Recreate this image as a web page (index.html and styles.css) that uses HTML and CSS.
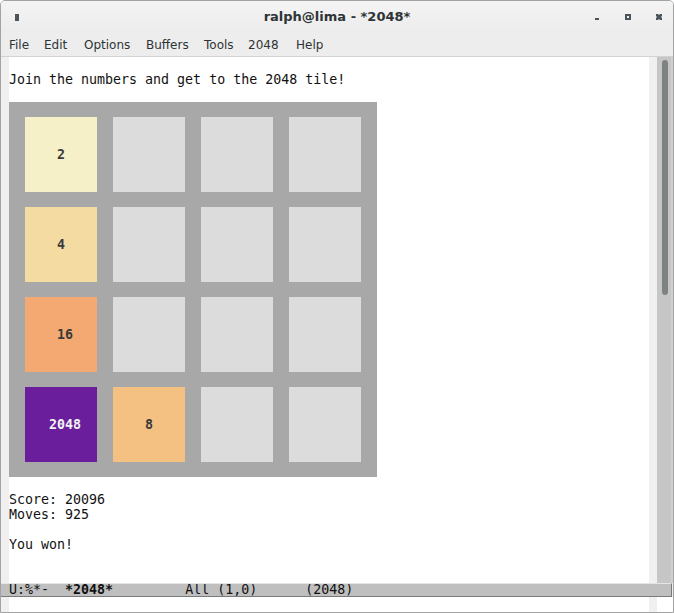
FILE: index.html
```html
<!DOCTYPE html>
<html>
<head>
<meta charset="utf-8">
<title>ralph@lima - *2048*</title>
<link rel="stylesheet" href="styles.css">
</head>
<body>
<div class="window">
  <div class="titlebar">
    <div class="tb-left"><span class="app-icon"></span></div>
    <div class="tb-title">ralph@lima - *2048*</div>
    <div class="tb-right">
      <svg class="btn" width="8" height="8" viewBox="0 0 8 8"><rect x="2" y="5" width="4" height="2" fill="#4b545a"/></svg>
      <svg class="btn" width="8" height="8" viewBox="0 0 8 8"><path d="M1 1h6v6h-6z M3 3v2h2v-2z" fill="#4b545a" fill-rule="evenodd"/></svg>
      <svg class="btn" width="8" height="8" viewBox="0 0 8 8"><path d="M1 1h2l1 1 1-1h2v2l-1 1 1 1v2h-2l-1-1-1 1h-2v-2l1-1-1-1z" fill="#4b545a"/></svg>
    </div>
  </div>
  <div class="menubar">
    <span class="mi m-file">File</span>
    <span class="mi m-edit">Edit</span>
    <span class="mi m-options">Options</span>
    <span class="mi m-buffers">Buffers</span>
    <span class="mi m-tools">Tools</span>
    <span class="mi m-2048">2048</span>
    <span class="mi m-help">Help</span>
  </div>
  <div class="main">
    <div class="fringe"></div>
    <div class="text">
      <div class="line"> </div>
      <div class="line">Join the numbers and get to the 2048 tile!</div>
      <div class="line"> </div>
      <div class="board">
        <div class="tile t2">    2</div>
        <div class="tile"></div>
        <div class="tile"></div>
        <div class="tile"></div>
        <div class="tile t4">    4</div>
        <div class="tile"></div>
        <div class="tile"></div>
        <div class="tile"></div>
        <div class="tile t16">    16</div>
        <div class="tile"></div>
        <div class="tile"></div>
        <div class="tile"></div>
        <div class="tile t2048">   2048</div>
        <div class="tile t8">    8</div>
        <div class="tile"></div>
        <div class="tile"></div>
      </div>
      <div class="line"> </div>
      <div class="line">Score: 20096</div>
      <div class="line">Moves: 925</div>
      <div class="line"> </div>
      <div class="line">You won!</div>
    </div>
    <div class="fringe"></div>
    <div class="scrollbar"><div class="thumb"></div></div>
  </div>
  <div class="modeline"> U:%*-  <b>*2048*</b>         All (1,0)      (2048)</div>
  <div class="minibuffer">
    <div class="fringe"></div>
    <div class="text"></div>
    <div class="fringe"></div>
    <div class="mb-end"></div>
  </div>
</div>
</body>
</html>
```
FILE: styles.css
```css
* { box-sizing: border-box; }
html, body { margin: 0; padding: 0; background: #ffffff; }
body { width: 674px; height: 613px; overflow: hidden; }

.window {
  width: 674px;
  height: 613px;
  border: 1px solid #a3a3a3;
  border-radius: 5px 5px 0 0;
  display: flex;
  flex-direction: column;
  overflow: hidden;
  background: #ededed;
}

.titlebar {
  height: 31px;
  flex: none;
  display: flex;
  align-items: center;
  background: linear-gradient(#f4f4f4, #ececec);
  font-family: "DejaVu Sans", sans-serif;
}
.tb-left { width: 120px; padding-left: 14px; display: flex; align-items: center; }
.app-icon { display: block; width: 4px; height: 7px; background: #4b545a; margin-top: 1px; }
.tb-title {
  flex: 1;
  text-align: center;
  font-weight: bold;
  font-size: 13px;
  color: #2e3436;
}
.tb-right { width: 120px; display: flex; justify-content: flex-end; gap: 23px; padding-right: 10px; padding-top: 1px; }
.btn { display: block; }

.menubar {
  height: 25px;
  flex: none;
  display: flex;
  align-items: center;
  background: #ededed;
  border-bottom: 1px solid #d2d2d2;
  font-family: "DejaVu Sans", sans-serif;
  font-size: 12px;
  color: #2e3436;
  padding-left: 8px;
  padding-top: 1px;
}
.mi { display: block; }
.m-file { width: 35px; }
.m-edit { width: 40px; }
.m-options { width: 62px; }
.m-buffers { width: 58px; }
.m-tools { width: 44px; }
.m-2048 { width: 48px; }

.main {
  height: 526px;
  flex: none;
  display: flex;
  background: #ffffff;
}
.fringe { width: 8px; flex: none; background: #f0f0f0; }
.text {
  flex: 1;
  background: #ffffff;
  font-family: "DejaVu Sans Mono", monospace;
  font-size: 13.3px;
  line-height: 15px;
  color: #111111;
  overflow: hidden;
}
.line { height: 15px; white-space: pre; }

.board {
  width: 368px;
  display: grid;
  grid-template-columns: repeat(4, 72px);
  grid-template-rows: repeat(4, 75px);
  column-gap: 16px;
  row-gap: 15px;
  padding: 15px 16px;
  background: #a8a8a8;
}
.tile {
  background: #dcdcdc;
  display: flex;
  align-items: center;
  white-space: pre;
  font-weight: bold;
  color: #3a3a3a;
}
.t2 { background: #f5f0c8; }
.t4 { background: #f3dba1; }
.t8 { background: #f5c183; }
.t16 { background: #f4a872; }
.t2048 { background: #6a1e9b; color: #f2f2f2; }

.scrollbar {
  width: 16px;
  flex: none;
  background: #c6c6c6;
  border-right: 2px solid #d0d0d0;
  padding: 3px 0 0 5px;
}
.thumb {
  width: 6px;
  height: 235px;
  background: #7e8381;
  border-radius: 3px;
}

.modeline {
  height: 14px;
  flex: none;
  background: #bfbfbf;
  border-top: 1px solid #e4e4e4;
  border-bottom: 1px solid #7a7a7a;
  border-right: 1px solid #7a7a7a;
  margin-right: 1px;
  font-family: "DejaVu Sans Mono", monospace;
  font-size: 13.3px;
  line-height: 12px;
  color: #111111;
  white-space: pre;
  overflow: hidden;
}
.modeline b { font-weight: bold; }

.minibuffer {
  height: 15px;
  flex: none;
  display: flex;
  background: #ffffff;
}
.mb-end { width: 16px; flex: none; background: #ffffff; }
```
